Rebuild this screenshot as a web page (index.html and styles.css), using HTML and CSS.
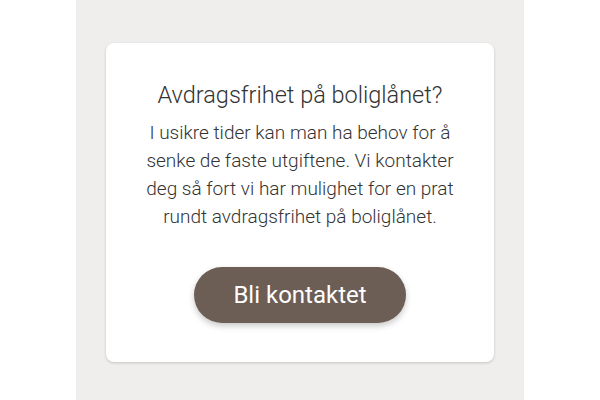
FILE: index.html
```html
<!DOCTYPE html>
<html lang="no">
<head>
  <meta charset="UTF-8" />
  <meta name="viewport" content="width=device-width, initial-scale=1.0"/>
  <title>Avdragsfrihet</title>
  <link rel="stylesheet" href="styles.css">
</head>
<body>
  <div class="column">
    <div class="card prev"></div>

    <div class="card">
      <h2>Avdragsfrihet på boliglånet?</h2>
      <p>I usikre tider kan man ha behov for å senke de faste utgiftene. Vi kontakter deg så fort vi har mulighet for en prat rundt avdragsfrihet på boliglånet.</p>
      <button>Bli kontaktet</button>
    </div>
  </div>
</body>
</html>
```

FILE: styles.css
```css
body { margin: 0; background: #fff; font-family: Roboto, "Liberation Sans", sans-serif; }
.column { width: 448px; height: 400px; margin: 0 auto; background: #efeeec; padding: 0 30px; box-sizing: border-box; overflow: hidden; }
.card { background: #fff; border-radius: 8px; box-shadow: 0 1px 3px rgba(0,0,0,0.18); text-align: center; padding: 38px 20px 39px; }
.card.prev { height: 100px; margin-top: -106px; padding: 0; }
.card + .card { margin-top: 49px; }
h2 { margin: 0; font-size: 23.5px; line-height: 28px; font-weight: 300; color: #333; }
p { max-width: 330px; margin: 10px auto 0; font-size: 19px; line-height: 28px; font-weight: 300; color: #333; }
button { margin-top: 36px; height: 56px; padding: 0 39px; border: none; border-radius: 28px; background: #6c5e55; color: #fff; font-family: inherit; font-size: 24px; cursor: pointer; box-shadow: 0 3px 6px rgba(0,0,0,0.22); }
```
